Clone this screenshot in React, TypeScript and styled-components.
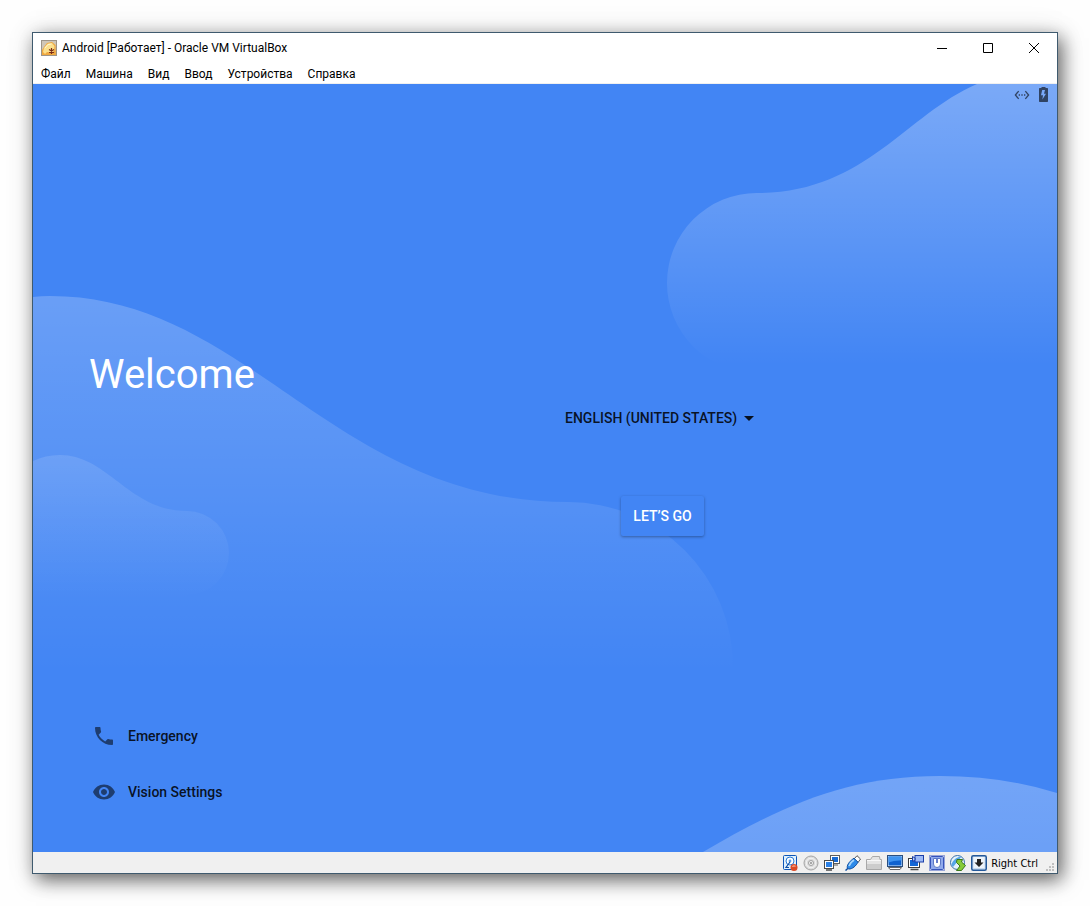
import React from "react";
import styled, { createGlobalStyle } from "styled-components";
import { MdPhone, MdVisibility, MdSettingsEthernet } from "react-icons/md";

const GlobalStyle = createGlobalStyle`
  *, *::before, *::after { box-sizing: border-box; }
  body {
    margin: 0;
    background: #fefefe;
  }
  button, select {
    margin: 0;
    padding: 0;
    border: 0;
    background: none;
    font: inherit;
    color: inherit;
    cursor: pointer;
  }
  svg { display: block; }
`;

const Desktop = styled.div`
  display: flex;
  min-height: 100vh;
  padding: 32px;
`;

const Window = styled.div`
  flex: 1;
  display: flex;
  flex-direction: column;
  min-width: 0;
  border: 1px solid #3f5a6e;
  background: #ffffff;
  box-shadow: 4px 6px 18px rgba(0, 0, 0, 0.6), 0 0 30px rgba(0, 0, 0, 0.08);
  font-family: Roboto, "Noto Sans", sans-serif;
  font-size: 12px;
  color: #000000;
`;

const TitleBar = styled.header`
  display: flex;
  align-items: center;
  height: 30px;
  padding-left: 8px;
`;

const Title = styled.h1`
  flex: 1;
  margin: 0 0 0 5px;
  font-size: 12px;
  line-height: 16px;
  font-weight: 400;
  white-space: nowrap;
`;

const CaptionButton = styled.button`
  display: flex;
  align-items: center;
  justify-content: center;
  width: 46px;
  height: 30px;
`;

const MenuBar = styled.nav`
  display: flex;
  height: 21px;
  padding: 2px 0 0 1px;
  border-bottom: 1px solid #f0f0f0;
`;

const MenuItem = styled.button`
  padding: 0 8px 0 7px;
  line-height: 18px;
  white-space: nowrap;
`;

const Screen = styled.main`
  position: relative;
  flex: 1;
  display: flex;
  flex-direction: column;
  overflow: hidden;
  background: #4285f4;
  font-family: Roboto, sans-serif;
  font-size: 14px;
  font-weight: 500;
`;

const Waves = styled.svg`
  position: absolute;
  inset: 0;
  width: 100%;
  height: 100%;
`;

const SystemBar = styled.div`
  position: relative;
  display: flex;
  justify-content: flex-end;
  align-items: center;
  gap: 9px;
  height: 21px;
  padding-right: 9px;
  color: rgba(0, 0, 0, 0.6);
`;

const Setup = styled.div`
  position: relative;
  flex: 1;
  display: grid;
  grid-template-columns: 1fr 1fr;
`;

const Intro = styled.section`
  display: flex;
  flex-direction: column;
  justify-content: space-between;
  padding: 246px 0 32px 56px;
`;

const Welcome = styled.h2`
  margin: 0;
  font-size: 40px;
  line-height: 48px;
  font-weight: 400;
  color: #ffffff;
`;

const Links = styled.div`
  display: flex;
  flex-direction: column;
  align-items: flex-start;
`;

const LinkButton = styled.button`
  display: flex;
  align-items: center;
  gap: 12px;
  height: 56px;
  padding-left: 3px;
  color: rgba(0, 0, 0, 0.87);

  svg { color: rgba(0, 0, 0, 0.54); }
`;

const Actions = styled.section`
  display: flex;
  flex-direction: column;
  align-items: flex-start;
  gap: 54px;
  padding: 289px 0 0 20px;
`;

const LanguageField = styled.label`
  position: relative;
  display: flex;
  align-items: center;
  color: rgba(0, 0, 0, 0.87);

  svg {
    position: absolute;
    right: 0;
    pointer-events: none;
  }
`;

const LanguageSelect = styled.select`
  appearance: none;
  height: 48px;
  padding-right: 16px;
  font-size: 14px;
  outline: none;
`;

const GoButton = styled.button`
  min-width: 83px;
  height: 40px;
  margin-left: 56px;
  padding: 0 12px;
  border-radius: 2px;
  background: #4285f4;
  box-shadow: 0 1px 3px rgba(0, 0, 0, 0.35);
  color: #ffffff;
  white-space: nowrap;
`;

const StatusBar = styled.footer`
  display: flex;
  align-items: center;
  justify-content: flex-end;
  gap: 4px;
  height: 21px;
  padding-right: 2px;
  background: #f0f0f0;
`;

const Indicators = styled.div`
  display: flex;
  gap: 5px;
`;

const HostKey = styled.span`
  margin-right: 4px;
  padding-top: 2px;
  font-family: "DejaVu Sans Condensed", "DejaVu Sans", sans-serif;
  font-size: 11px;
  line-height: 16px;
  white-space: nowrap;
`;

const Grip = styled.svg`
  align-self: flex-end;
  margin-bottom: 1px;
`;

function AppIcon() {
  return (
    <svg width="16" height="16" viewBox="0 0 16 16" aria-hidden="true">
      <rect x="0.5" y="0.5" width="15" height="15" fill="#cfc6b8" stroke="#9d9488" />
      <path d="M1 15V10l2-3 3-4 5-1 3.500 3 .5 10z" fill="#f0a83e" />
      <path d="M2 12l1-4 3.500-4.200 4.500-.8 2.500 3-.5 5-3 2-4-1-2 2z" fill="#fbe08e" />
      <path d="M4 8l3-3.500 3.500-.5" stroke="#fff6d0" fill="none" />
      <path d="M10.500 8v6M8 9.500l5 3M13 9.500l-5 3" stroke="#7a2a14" strokeWidth="1.200" />
    </svg>
  );
}

function BatteryIcon() {
  return (
    <svg width="9" height="15" viewBox="0 0 9 15" aria-hidden="true">
      <path
        fillRule="evenodd"
        fill="currentColor"
        d="M2.500 0h4v1H8.300Q9 1 9 1.700V14.300Q9 15 8.300 15H.7Q0 15 0 14.300V1.700Q0 1 .7 1H2.500zM6 3H3.200L2 8.300H4L3.400 12.500L7 6.700H5z"
      />
    </svg>
  );
}

function WaveArt() {
  return (
    <Waves viewBox="0 0 1024 768" preserveAspectRatio="none" aria-hidden="true">
      <defs>
        <linearGradient id="sky" gradientUnits="userSpaceOnUse" x1="0" y1="0" x2="0" y2="281">
          <stop offset="0" stopColor="#fff" stopOpacity="0.3" />
          <stop offset="1" stopColor="#fff" stopOpacity="0" />
        </linearGradient>
        <linearGradient id="hill" gradientUnits="userSpaceOnUse" x1="0" y1="212" x2="0" y2="588">
          <stop offset="0" stopColor="#fff" stopOpacity="0.21" />
          <stop offset="1" stopColor="#fff" stopOpacity="0" />
        </linearGradient>
        <linearGradient id="puff" gradientUnits="userSpaceOnUse" x1="0" y1="371" x2="0" y2="516">
          <stop offset="0" stopColor="#fff" stopOpacity="0.12" />
          <stop offset="1" stopColor="#fff" stopOpacity="0" />
        </linearGradient>
        <linearGradient id="dune" gradientUnits="userSpaceOnUse" x1="0" y1="692" x2="0" y2="768">
          <stop offset="0" stopColor="#fff" stopOpacity="0.26" />
          <stop offset="1" stopColor="#fff" stopOpacity="0.22" />
        </linearGradient>
      </defs>
      <path fill="url(#sky)" d="M944 0C872 31 832 109 724 109A90 90 0 0 0 724 289H1024V0z" />
      <path fill="url(#hill)" d="M0 213Q8 212 17 212C215 212 300 418 535 418A165 165 0 0 1 700 583V588H0z" />
      <path fill="url(#puff)" d="M0 377Q12 371 27 371C75 371 96 427 154 427A42 42 0 0 1 154 511V516H0z" />
      <path fill="url(#dune)" d="M670 768C750 721 815 692 907 692Q970 692 1024 709V768z" />
    </Waves>
  );
}

function HardDiskIcon() {
  return (
    <svg width="16" height="16" viewBox="0 0 16 16" aria-hidden="true">
      <rect x="1.500" y="0.500" width="13" height="14" rx="1" fill="#e2f1fd" stroke="#0d56b8" />
      <circle cx="8" cy="6" r="4" fill="#ffffff" stroke="#2a7ad6" />
      <circle cx="8" cy="6" r="1.400" fill="#5aa0e4" />
      <path d="M8 7l-4 5.500h3" stroke="#0d4fa8" strokeWidth="1.200" fill="none" />
      <circle cx="12" cy="12.500" r="3.500" fill="#dc4a26" />
      <path d="M9.800 12a2.300 2.300 0 0 1 4.300-.6z" fill="#f6a58a" />
    </svg>
  );
}

function DiscIcon() {
  return (
    <svg width="16" height="16" viewBox="0 0 16 16" aria-hidden="true">
      <circle cx="8" cy="8" r="7" fill="#dcdcdc" stroke="#a4a4a4" />
      <circle cx="8" cy="8" r="4.800" fill="none" stroke="#f6f6f6" />
      <circle cx="8" cy="8" r="2.500" fill="#f2f2f2" stroke="#a0a0a0" />
      <circle cx="8" cy="8" r="1" fill="#8f8f8f" />
    </svg>
  );
}

function NetworkIcon() {
  return (
    <svg width="16" height="16" viewBox="0 0 16 16" aria-hidden="true">
      <rect x="6.500" y="0.500" width="9" height="8" fill="#fff" stroke="#5d5d5d" />
      <rect x="8" y="2" width="6" height="5" fill="#1769d2" />
      <path d="M9 10h5" stroke="#5d5d5d" />
      <rect x="0.500" y="5.500" width="9" height="8" fill="#fff" stroke="#4a4a4a" />
      <rect x="2" y="7" width="6" height="5" fill="#2a80e6" />
      <path d="M2 15h6" stroke="#4a4a4a" strokeWidth="1.500" />
    </svg>
  );
}

function UsbIcon() {
  return (
    <svg width="16" height="16" viewBox="0 0 16 16" aria-hidden="true">
      <path d="M9 4l3-3.300L15.500 4 13 7.500z" fill="#fff" stroke="#555" />
      <path d="M2.200 12.800C2 9 5.500 5.500 9 3.200l4 4C11 10.800 7.500 14.200 3.800 14z" fill="#2d8ae8" stroke="#0f4fa2" />
      <path d="M4 11C5 8.500 7 6.200 9 5" stroke="#a8d6fb" strokeWidth="1.800" fill="none" />
      <path d="M3 13.200L.5 15.500" stroke="#0f4fa2" strokeWidth="1.500" />
    </svg>
  );
}

function FolderIcon() {
  return (
    <svg width="16" height="16" viewBox="0 0 16 16" aria-hidden="true">
      <path d="M.5 4.500h4l2-3h7l.5 3h1.500v10H.5z" fill="#e4e4e4" stroke="#a8a8a8" />
      <path d="M1 9h14v5H1z" fill="#cccccc" />
      <path d="M1 5.500h14" stroke="#f8f8f8" />
    </svg>
  );
}

function DisplayIcon() {
  return (
    <svg width="16" height="16" viewBox="0 0 16 16" aria-hidden="true">
      <rect x="0.500" y="0.500" width="15" height="11" fill="#dff0ff" stroke="#2a4f80" />
      <rect x="1.500" y="1.500" width="13" height="9" fill="#0f62cf" />
      <path d="M1.500 1.500h13v4Q8 5 1.500 7.500z" fill="#3f94f0" />
      <path d="M1.500 12.500h13l-1.500 2H3z" fill="#fff" stroke="#666" />
    </svg>
  );
}

function RecordIcon() {
  return (
    <svg width="16" height="16" viewBox="0 0 16 16" aria-hidden="true">
      <rect x="0.500" y="3.500" width="11" height="9" fill="#fff" stroke="#3d3d3d" />
      <rect x="2" y="5" width="8" height="6" fill="#1467d6" />
      <path d="M2.500 14.500h8" stroke="#4d4d4d" strokeWidth="1.500" />
      <rect x="7" y="0.500" width="8.500" height="6.500" fill="#9dbaf6" stroke="#1c3fa8" />
      <path d="M7 3L4.500 1.500v5L7 5z" fill="#b9d0fa" stroke="#1c3fa8" />
    </svg>
  );
}

function ProcessorIcon() {
  return (
    <svg width="16" height="16" viewBox="0 0 16 16" aria-hidden="true">
      <rect x="0.500" y="0.500" width="15" height="15" fill="none" stroke="#3a56c0" strokeDasharray="1 1" />
      <rect x="1.500" y="1.500" width="13" height="13" rx="1" fill="#8fa9ec" stroke="#3553bb" />
      <path d="M4.500 3.500h7V9a3.500 3.500 0 0 1-7 0z" fill="#fff" stroke="#5c78c6" />
      <path d="M8 4v4" stroke="#3553bb" strokeWidth="1.500" />
    </svg>
  );
}

function MouseIcon() {
  return (
    <svg width="16" height="16" viewBox="0 0 16 16" aria-hidden="true">
      <circle cx="7.500" cy="7.500" r="7" fill="#e4f3fd" stroke="#3a6ea8" />
      <path d="M1.500 10C2 6 6 2 11.500 1.500L8 6l-5 6z" fill="#56a6e8" />
      <path d="M7 4.500h5.500L11.500 7l4 3.500-4 5H6.500L10 11 6.500 7.500z" fill="#86cc38" stroke="#39761a" />
    </svg>
  );
}

function KeyboardIcon() {
  return (
    <svg width="16" height="16" viewBox="0 0 16 16" aria-hidden="true">
      <rect x="0.750" y="0.750" width="14.500" height="14.500" rx="1.500" fill="#c6daf0" stroke="#23589a" strokeWidth="1.500" />
      <rect x="2.500" y="2" width="11" height="11" fill="#edf4fb" />
      <path d="M6 4h4v3.500H12.500L8 12 3.500 7.500H6z" fill="#222222" />
    </svg>
  );
}

const menus = ["Файл", "Машина", "Вид", "Ввод", "Устройства", "Справка"];

const indicators = [
  HardDiskIcon,
  DiscIcon,
  NetworkIcon,
  UsbIcon,
  FolderIcon,
  DisplayIcon,
  RecordIcon,
  ProcessorIcon,
  MouseIcon,
  KeyboardIcon,
];

export default function App() {
  return (
    <>
      <GlobalStyle />
      <Desktop>
        <Window>
          <TitleBar>
            <AppIcon />
            <Title>Android [Работает] - Oracle VM VirtualBox</Title>
            <CaptionButton aria-label="Свернуть">
              <svg width="10" height="10" viewBox="0 0 10 10" stroke="#000">
                <path d="M0 5.500h10" />
              </svg>
            </CaptionButton>
            <CaptionButton aria-label="Развернуть">
              <svg width="10" height="10" viewBox="0 0 10 10" stroke="#000" fill="none">
                <path d="M.5.5h9v9h-9z" />
              </svg>
            </CaptionButton>
            <CaptionButton aria-label="Закрыть">
              <svg width="10" height="10" viewBox="0 0 10 10" stroke="#000">
                <path d="M0 0l10 10M10 0L0 10" />
              </svg>
            </CaptionButton>
          </TitleBar>
          <MenuBar>
            {menus.map((name) => (
              <MenuItem key={name}>{name}</MenuItem>
            ))}
          </MenuBar>
          <Screen>
            <WaveArt />
            <SystemBar>
              <MdSettingsEthernet size={16} />
              <BatteryIcon />
            </SystemBar>
            <Setup>
              <Intro>
                <Welcome>Welcome</Welcome>
                <Links>
                  <LinkButton>
                    <MdPhone size={24} />
                    Emergency
                  </LinkButton>
                  <LinkButton>
                    <MdVisibility size={24} />
                    Vision Settings
                  </LinkButton>
                </Links>
              </Intro>
              <Actions>
                <LanguageField>
                  <LanguageSelect aria-label="Language">
                    <option>ENGLISH (UNITED STATES)</option>
                  </LanguageSelect>
                  <svg width="10" height="5" viewBox="0 0 10 5" aria-hidden="true">
                    <path d="M0 0h10L5 5z" fill="currentColor" />
                  </svg>
                </LanguageField>
                <GoButton>LET’S GO</GoButton>
              </Actions>
            </Setup>
          </Screen>
          <StatusBar>
            <Indicators>
              {indicators.map((Indicator, index) => (
                <Indicator key={index} />
              ))}
            </Indicators>
            <HostKey>Right Ctrl</HostKey>
            <Grip width="9" height="9" viewBox="0 0 9 9" fill="#bfbfbf" aria-hidden="true">
              <path d="M6 0h2v2H6zM3 3h2v2H3zM6 3h2v2H6zM0 6h2v2H0zM3 6h2v2H3zM6 6h2v2H6z" />
            </Grip>
          </StatusBar>
        </Window>
      </Desktop>
    </>
  );
}
